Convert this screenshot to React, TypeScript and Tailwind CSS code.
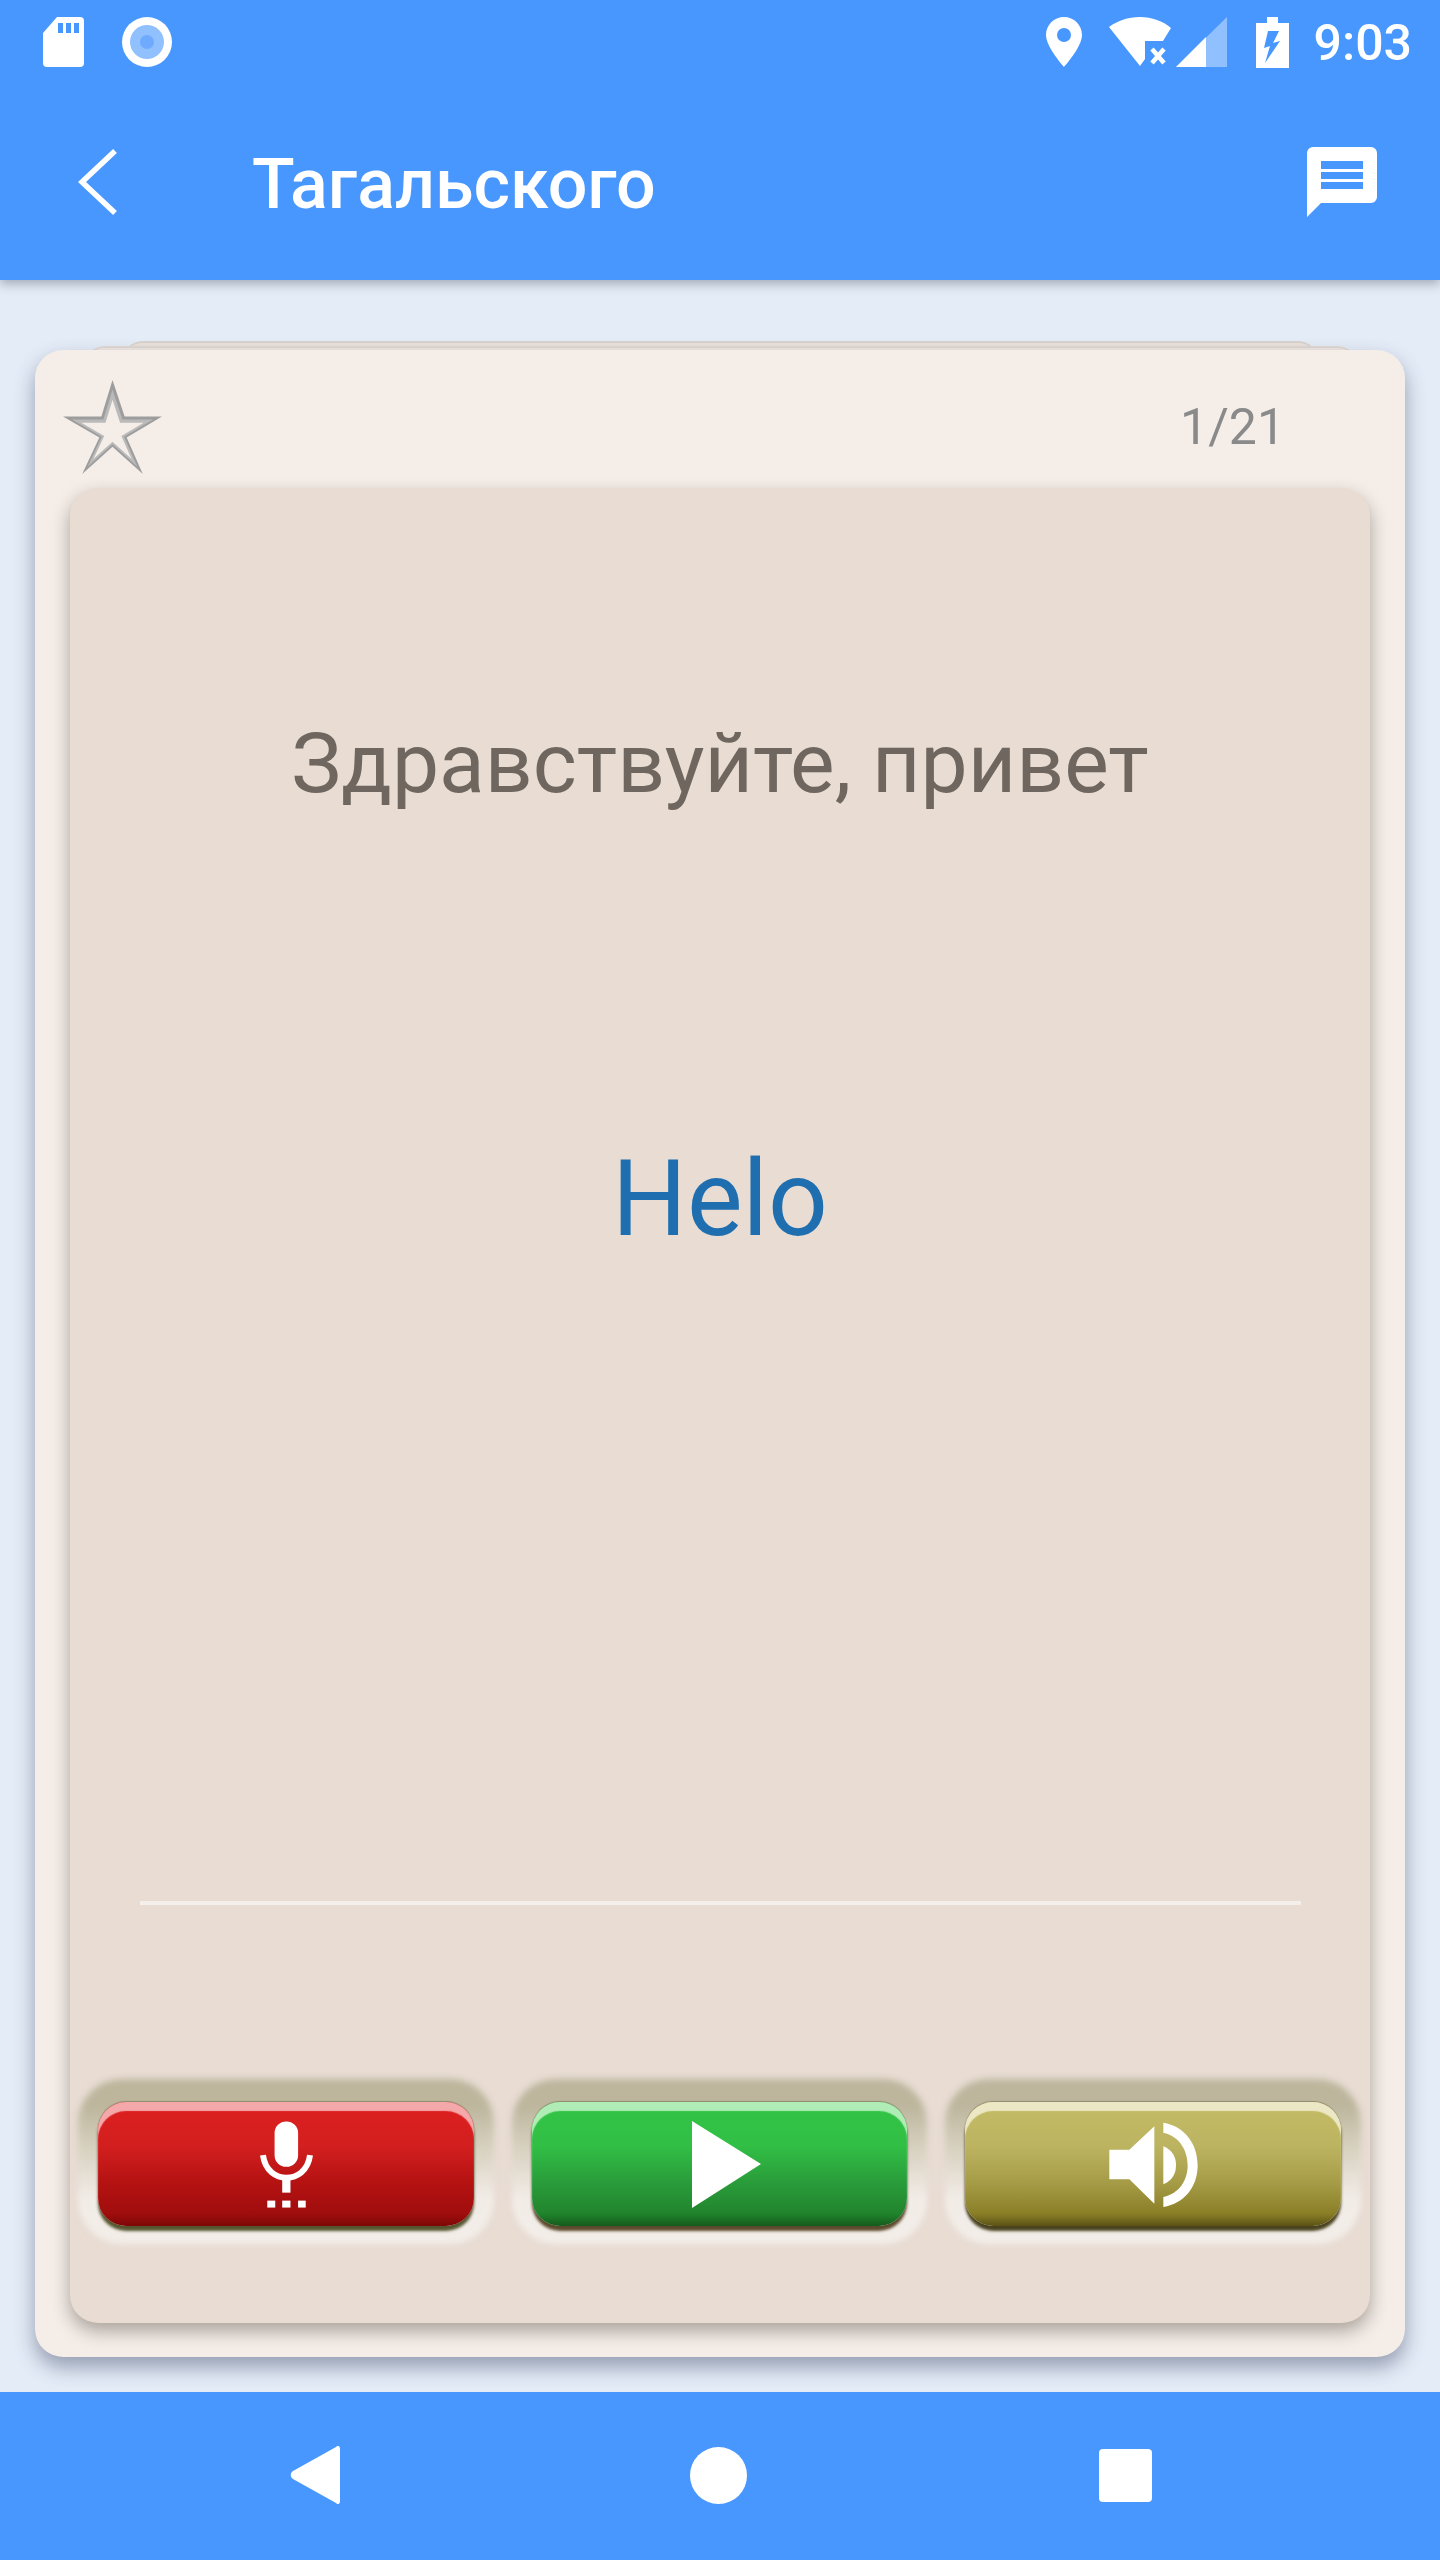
const SdCardIcon = () => (
  <svg width="41" height="50" viewBox="0 0 41 50">
    <path d="M14 0H37a4 4 0 0 1 4 4V46a4 4 0 0 1-4 4H4a4 4 0 0 1-4-4V16z" fill="#fff" />
    <rect x="15" y="6" width="5" height="10" fill="#4897fe" />
    <rect x="23" y="6" width="5" height="10" fill="#4897fe" />
    <rect x="31" y="6" width="5" height="10" fill="#4897fe" />
  </svg>
);

const RecordIcon = () => (
  <div className="flex h-[50px] w-[50px] items-center justify-center rounded-full bg-white">
    <div className="flex h-[34px] w-[34px] items-center justify-center rounded-full bg-[#91c0fe]">
      <div className="h-[14px] w-[14px] rounded-full bg-[#6eaafe]" />
    </div>
  </div>
);

const PinIcon = () => (
  <svg width="36" height="50" viewBox="0 0 36 50">
    <path
      fillRule="evenodd"
      d="M18 0C8 0 0 8 0 18C0 30 18 50 18 50S36 30 36 18C36 8 28 0 18 0ZM18 11a7 7 0 1 1 0 14a7 7 0 0 1 0-14Z"
      fill="#fff"
    />
  </svg>
);

const WifiIcon = () => (
  <svg width="64" height="50" viewBox="0 0 64 50">
    <path d="M0 10C8 4 19 0 31 0S54 4 62 11L54 24H36V42L31 49Z" fill="#fff" />
    <path d="M43 32L55 46M55 32L43 46" stroke="#fff" strokeWidth="4.5" />
  </svg>
);

const SignalIcon = () => (
  <svg width="51" height="50" viewBox="0 0 51 50">
    <path d="M0 50L51 0V50Z" fill="#91c0fe" />
    <path d="M0 50L30 20V50Z" fill="#fff" />
  </svg>
);

const BatteryIcon = () => (
  <svg width="33" height="51" viewBox="0 0 33 51">
    <path
      fillRule="evenodd"
      d="M11 0H22V6H33V51H0V6H11ZM12 14L8 31L14 29L9 46L24 24L17 26L23 14Z"
      fill="#fff"
    />
  </svg>
);

const ChatIcon = () => (
  <svg width="70" height="70" viewBox="0 0 70 70">
    <path d="M6 0H64a6 6 0 0 1 6 6V50a6 6 0 0 1-6 6H14L0 70V6a6 6 0 0 1 6-6Z" fill="#fff" />
    <rect x="14" y="14" width="42" height="8" fill="#4897fe" />
    <rect x="14" y="25" width="42" height="7" fill="#4897fe" />
    <rect x="14" y="35" width="42" height="7" fill="#4897fe" />
  </svg>
);

const StarIcon = () => {
  const points = "49,0 61,36 98,36 63,57 79,93 49,66 19,93 36,57 0,36 38,36";
  return (
    <svg width="100" height="95" viewBox="0 0 99 94">
      <polygon points={points} fill="#9d9d9d" />
      <polygon points={points} fill="#bababa" transform="translate(49 53) scale(0.82) translate(-49 -53)" />
      <polygon points={points} fill="#f4ede8" transform="translate(49 53) scale(0.63) translate(-49 -53)" />
    </svg>
  );
};

const MicIcon = () => (
  <svg className="ml-[2px]" width="53" height="87" viewBox="0 0 160 260">
    <rect x="44" y="0" width="71" height="137" rx="35" fill="#fff" />
    <path d="M9 102C15 150 50 170 80 170S145 150 151 102" fill="none" stroke="#fff" strokeWidth="18" />
    <rect x="67" y="165" width="25" height="50" fill="#fff" />
    <rect x="22" y="239" width="24" height="21" fill="#fff" />
    <rect x="67" y="239" width="25" height="21" fill="#fff" />
    <rect x="115" y="239" width="23" height="21" fill="#fff" />
  </svg>
);

const PlayIcon = () => (
  <svg className="ml-[14px]" width="69" height="87" viewBox="0 0 69 87">
    <polygon points="0,0 69,43 0,87" fill="#fff" />
  </svg>
);

const SpeakerIcon = () => (
  <svg width="89" height="85" viewBox="0 0 265 255">
    <polygon points="0,83 60,83 135,13 135,245 60,172 0,172" fill="#fff" />
    <path d="M162 73C190 85 200 105 200 130C200 155 190 175 162 187Z" fill="#fff" />
    <path d="M162 2C225 12 265 65 265 130C265 195 225 245 162 255L162 225C210 215 235 175 235 130C235 85 210 42 162 32Z" fill="#fff" />
  </svg>
);

const GlossyButton = ({ className, children }: { className: string; children: React.ReactNode }) => (
  <div className="relative flex-1">
    <div className="absolute -inset-x-[20px] -top-[23px] -bottom-[18px] rounded-[44px] bg-[linear-gradient(to_bottom,#bdb69d_0%,#bdb69d_16%,#d5cfbd_40%,#f2ece7_72%,#f3eee9_100%)] blur-[3px]" />
    <div className={`relative flex h-[124px] items-center justify-center rounded-[28px] ${className}`}>
      {children}
    </div>
  </div>
);

export default function App() {
  return (
    <div className="flex h-[2560px] w-[1440px] flex-col overflow-hidden bg-[#e4ecf7] font-['Roboto',sans-serif]">
      <header className="relative z-20 h-[280px] bg-[#4897fe] shadow-[0_4px_10px_rgba(40,50,70,0.35)]">
        <div className="flex h-[84px] items-center pr-[28px] pl-[43px]">
          <div className="flex items-center gap-[38px]">
            <SdCardIcon />
            <RecordIcon />
          </div>
          <div className="ml-auto flex items-center">
            <PinIcon />
            <div className="ml-[27px]">
              <WifiIcon />
            </div>
            <div className="ml-[3px]">
              <SignalIcon />
            </div>
            <div className="ml-[29px]">
              <BatteryIcon />
            </div>
            <span className="ml-[25px] pt-[2px] text-[50px] leading-none font-medium text-white">9:03</span>
          </div>
        </div>
        <div className="flex items-center pt-[61px] pr-[63px] pl-[78px]">
          <svg width="40" height="68" viewBox="0 0 40 68">
            <path d="M37 3L4 34L37 65" fill="none" stroke="#fff" strokeWidth="5.5" />
          </svg>
          <h1 className="mt-[4px] ml-[134px] text-[70px] leading-none font-medium text-white">Тагальского</h1>
          <div className="ml-auto">
            <ChatIcon />
          </div>
        </div>
      </header>

      <main className="flex-1 px-[35px] pt-[70px]">
        <div className="relative h-[2007px]">
          {/* stacked cards peeking out behind the main one */}
          <div className="absolute top-[-9px] right-[87px] left-[88px] h-[40px] rounded-[24px] border-t-2 border-[#d9d2cc] bg-[#e9e2dc]" />
          <div className="absolute top-[-4px] right-[48px] left-[50px] h-[40px] rounded-[24px] border-t-2 border-[#e0d8d2] bg-[#efe8e2]" />
          <div className="relative flex h-full flex-col rounded-[28px] bg-[#f4ede8] px-[35px] pb-[34px] shadow-[0_10px_20px_rgba(50,60,90,0.45)]">
            <div className="relative h-[138px]">
              <div className="absolute top-[30px] left-[-7px]">
                <StarIcon />
              </div>
              <span className="absolute top-[52px] right-[85px] text-[50px] leading-none text-[#8a8a8a]">1/21</span>
            </div>
            <div className="flex flex-1 flex-col items-center rounded-[28px] bg-[#e8dcd3] shadow-[0_8px_18px_rgba(60,50,40,0.4)]">
              <p className="mt-[234px] text-[84px] leading-none text-[#6f675f]">Здравствуйте, привет</p>
              <p className="mt-[341px] text-[105px] leading-none text-[#1f6fb0]">Helo</p>
              <div className="mt-[649px] h-[4px] w-[1161px] bg-[#f4efea]" />
              <div className="mt-[197px] flex w-full gap-[58px] pr-[29px] pl-[28px]">
                <GlossyButton className="bg-[linear-gradient(to_bottom,#de1f1f_0%,#d31f1f_35%,#b51212_65%,#a00d0d_90%,#7d0606_100%)] shadow-[inset_0_9px_1px_0_#f4a8aa,0_5px_3px_#55552f,0_-1px_1px_#8f8a70]">
                  <MicIcon />
                </GlossyButton>
                <GlossyButton className="bg-[linear-gradient(to_bottom,#32c546_0%,#31bf45_35%,#2a9c3a_65%,#21842d_90%,#145a1c_100%)] shadow-[inset_0_9px_1px_0_#b0ecb6,0_5px_3px_#5c4a2c,0_-1px_1px_#8f8a70]">
                  <PlayIcon />
                </GlossyButton>
                <GlossyButton className="bg-[linear-gradient(to_bottom,#c4bb64_0%,#bdb462_35%,#a69c47_65%,#8a7f27_90%,#5c5215_100%)] shadow-[inset_0_9px_1px_0_#ece7c4,0_5px_3px_#4a4320,0_-1px_1px_#8f8a70]">
                  <SpeakerIcon />
                </GlossyButton>
              </div>
            </div>
          </div>
        </div>
      </main>

      <nav className="relative z-20 flex h-[168px] items-center bg-[#4897fe] pb-[2px]">
        <div className="ml-[290px]">
          <svg width="50" height="58" viewBox="0 0 50 58">
            <path d="M46 1C48 -1 50 0 50 3V55C50 58 48 59 46 57L3 33C0 31 0 27 3 25Z" fill="#fff" />
          </svg>
        </div>
        <div className="ml-[350px] h-[57px] w-[57px] rounded-full bg-white" />
        <div className="ml-[352px] h-[53px] w-[53px] rounded-[4px] bg-white" />
      </nav>
    </div>
  );
}
